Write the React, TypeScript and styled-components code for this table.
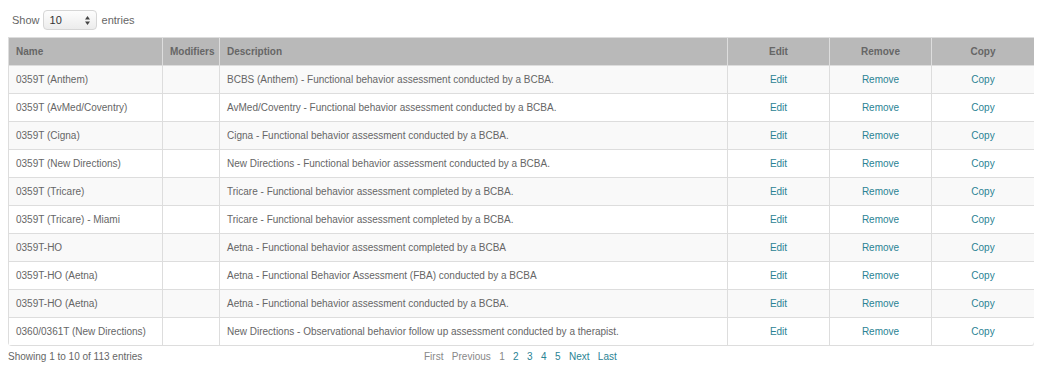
import React from 'react'
import styled, { createGlobalStyle } from 'styled-components'

const GlobalStyle = createGlobalStyle`
    body {
        margin: 8px;
        font-family: "Liberation Sans", Arial, sans-serif;
        font-size: 10px;
        color: #666;
        background: #fff;
    }
`

const rows = [
    { name: '0359T (Anthem)', desc: 'BCBS (Anthem) - Functional behavior assessment conducted by a BCBA.' },
    { name: '0359T (AvMed/Coventry)', desc: 'AvMed/Coventry - Functional behavior assessment conducted by a BCBA.' },
    { name: '0359T (Cigna)', desc: 'Cigna - Functional behavior assessment conducted by a BCBA.' },
    { name: '0359T (New Directions)', desc: 'New Directions - Functional behavior assessment conducted by a BCBA.' },
    { name: '0359T (Tricare)', desc: 'Tricare - Functional behavior assessment completed by a BCBA.' },
    { name: '0359T (Tricare) - Miami', desc: 'Tricare - Functional behavior assessment completed by a BCBA.' },
    { name: '0359T-HO', desc: 'Aetna - Functional behavior assessment completed by a BCBA' },
    { name: '0359T-HO (Aetna)', desc: 'Aetna - Functional Behavior Assessment (FBA) conducted by a BCBA' },
    { name: '0359T-HO (Aetna)', desc: 'Aetna - Functional behavior assessment conducted by a BCBA.' },
    { name: '0360/0361T (New Directions)', desc: 'New Directions - Observational behavior follow up assessment conducted by a therapist.' },
]

function App() {
    return (
        <Wrapper>
            <GlobalStyle />
            <LengthBar>
                Show
                <Select>
                    <span>10</span>
                    <svg width="5" height="9" viewBox="0 0 5 9">
                        <path d="M2.5 0 L5 3.5 L0 3.5 Z" fill="#444" />
                        <path d="M0 5.5 L5 5.5 L2.5 9 Z" fill="#444" />
                    </svg>
                </Select>
                entries
            </LengthBar>
            <Table>
                <colgroup>
                    <col style={{ width: 154 }} />
                    <col style={{ width: 57 }} />
                    <col style={{ width: 508 }} />
                    <col style={{ width: 102 }} />
                    <col style={{ width: 102 }} />
                    <col style={{ width: 103 }} />
                </colgroup>
                <thead>
                    <tr>
                        <Th>Name</Th>
                        <Th>Modifiers</Th>
                        <Th>Description</Th>
                        <Th $center>Edit</Th>
                        <Th $center>Remove</Th>
                        <Th $center>Copy</Th>
                    </tr>
                </thead>
                <tbody>
                    {rows.map((r, i) => (
                        <Row key={i} $odd={i % 2 === 0}>
                            <Td>{r.name}</Td>
                            <Td></Td>
                            <Td>{r.desc}</Td>
                            <Td $center><Link>Edit</Link></Td>
                            <Td $center><Link>Remove</Link></Td>
                            <Td $center><Link>Copy</Link></Td>
                        </Row>
                    ))}
                </tbody>
            </Table>
            <Footer>
                <Info>Showing 1 to 10 of 113 entries</Info>
                <Paging>
                    <PageLink $disabled>First</PageLink>
                    <PageLink $disabled>Previous</PageLink>
                    <PageLink $disabled>1</PageLink>
                    <PageLink>2</PageLink>
                    <PageLink>3</PageLink>
                    <PageLink>4</PageLink>
                    <PageLink>5</PageLink>
                    <PageLink>Next</PageLink>
                    <PageLink>Last</PageLink>
                </Paging>
            </Footer>
        </Wrapper>
    )
}

const Wrapper = styled.div`
    width: 1026px;
`

const LengthBar = styled.div`
    display: flex;
    align-items: center;
    gap: 5px;
    height: 22px;
    margin: 1px 0 6px 4px;
    font-size: 11px;
    color: #666;
`

const Select = styled.div`
    display: flex;
    align-items: center;
    justify-content: space-between;
    box-sizing: border-box;
    width: 54px;
    height: 20px;
    margin-left: -2px;
    padding: 0 6px 0 6px;
    border: 1px solid #d6d6d6;
    border-radius: 4px;
    background: linear-gradient(#fdfdfd, #ececec);
    color: #333;
    font-size: 11px;
`

const Table = styled.table`
    width: 1026px;
    table-layout: fixed;
    border-collapse: separate;
    border-spacing: 0;
    border-left: 1px solid #ddd;
    border-bottom: 1px solid #ddd;
    border-radius: 0 0 4px 4px;
`

const Th = styled.th<{ $center?: boolean }>`
    box-sizing: border-box;
    height: 28px;
    padding: 0 7px;
    background: #b9b9b9;
    color: #666;
    font-weight: bold;
    font-size: 10px;
    white-space: nowrap;
    text-align: ${p => (p.$center ? 'center' : 'left')};
    border-top: 1px solid #ddd;
    border-right: 1px solid #ddd;
`

const Row = styled.tr<{ $odd: boolean }>`
    background: ${p => (p.$odd ? '#f9f9f9' : '#fff')};
`

const Td = styled.td<{ $center?: boolean }>`
    box-sizing: border-box;
    height: 28px;
    padding: 0 7px;
    color: #666;
    font-size: 10px;
    white-space: nowrap;
    text-align: ${p => (p.$center ? 'center' : 'left')};
    border-top: 1px solid #ddd;
    border-right: 1px solid #ddd;
    tr:last-child &:last-child {
        border-bottom-right-radius: 4px;
    }
`

const Link = styled.a`
    color: #2a8394;
    text-decoration: none;
    cursor: pointer;
`

const Footer = styled.div`
    display: flex;
    align-items: center;
    height: 21px;
    font-size: 10px;
`

const Info = styled.div`
    width: 416px;
    color: #666;
`

const Paging = styled.div`
    display: flex;
    gap: 8.4px;
`

const PageLink = styled.span<{ $disabled?: boolean }>`
    color: ${p => (p.$disabled ? '#888' : '#2a8394')};
    cursor: ${p => (p.$disabled ? 'default' : 'pointer')};
`

export default App
